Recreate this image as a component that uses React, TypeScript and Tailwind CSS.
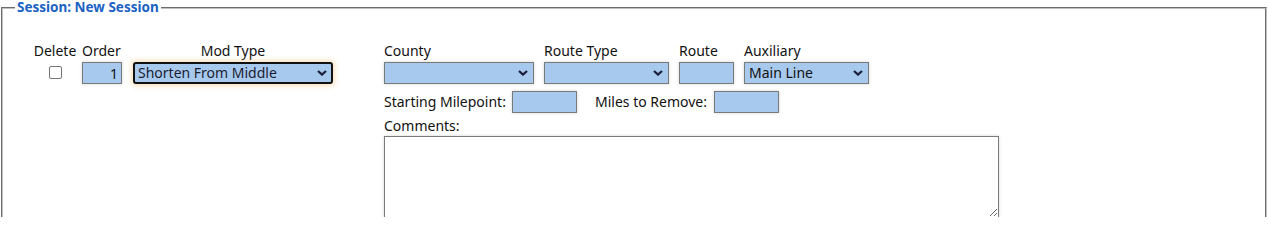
import React, { useState } from 'react'

const fieldBox =
  'h-[22px] border border-[#7a7a7a] bg-[#a7c9ee] text-[14px] text-[#111] shadow-[0_0_3px_rgba(0,0,0,0.18)] outline-none'

function Chevron() {
  return (
    <svg
      className="pointer-events-none absolute right-[6px] top-[8px]"
      width="10"
      height="6"
      viewBox="0 0 10 6"
      fill="none"
    >
      <path d="M1 1l4 3.6L9 1" stroke="#1b1d3a" strokeWidth="2.2" />
    </svg>
  )
}

function Select({
  width,
  value,
  options,
  focused,
}: {
  width: string
  value: string
  options: string[]
  focused?: boolean
}) {
  const [val, setVal] = useState(value)
  return (
    <div className={`relative ${width}`}>
      <select
        value={val}
        onChange={(e) => setVal(e.target.value)}
        className={
          focused
            ? 'h-[22px] w-full appearance-none rounded-[3px] border-2 border-[#111] bg-[#a7c9ee] pl-[3px] text-[14px] text-[#1c1c30] shadow-[0_0_5px_2px_rgba(240,190,120,0.45)] outline-none'
            : `${fieldBox} w-full appearance-none pl-[4px]`
        }
      >
        {options.map((o) => (
          <option key={o} value={o}>
            {o}
          </option>
        ))}
      </select>
      <Chevron />
    </div>
  )
}

export default function App() {
  const [order, setOrder] = useState('1')

  return (
    <div className="h-[217px] overflow-hidden bg-white font-['Noto_Sans','Open_Sans',sans-serif] text-[14px] leading-4 text-[#111]">
      <fieldset className="mx-[1px] border-2 border-[#c0c0c0] px-3 pb-3 [border-style:groove]">
        <legend className="px-[2px] text-[13.5px] leading-[15px] font-bold text-[#1b62c4]">Session: New Session</legend>

        <div className="mt-[28px] flex items-start">
          <div className="ml-[17px] flex w-[46px] flex-col items-center gap-[3px]">
            <label>Delete</label>
            <input
              type="checkbox"
              className="mt-[4px] h-[13px] w-[13px] appearance-none rounded-[2px] border border-[#767676] bg-white"
            />
          </div>
          <div className="ml-[4px] flex w-[40px] flex-col gap-[3px]">
            <label>Order</label>
            <input
              value={order}
              onChange={(e) => setOrder(e.target.value)}
              className={`${fieldBox} w-[40px] pr-[3px] text-right`}
            />
          </div>
          <div className="ml-[11px] flex w-[200px] flex-col items-center gap-[3px]">
            <label>Mod Type</label>
            <Select
              width="w-[200px]"
              value="Shorten From Middle"
              options={['Shorten From Middle', 'Shorten From Start', 'Shorten From End']}
              focused
            />
          </div>

          <div className="ml-[51px] flex flex-col">
            <div className="flex gap-[10px]">
              <div className="flex flex-col gap-[3px]">
                <label>County</label>
                <Select width="w-[150px]" value="" options={['']} />
              </div>
              <div className="flex flex-col gap-[3px]">
                <label>Route Type</label>
                <Select width="w-[125px]" value="" options={['']} />
              </div>
              <div className="flex flex-col gap-[3px]">
                <label>Route</label>
                <input className={`${fieldBox} w-[55px] px-1`} />
              </div>
              <div className="flex flex-col gap-[3px]">
                <label>Auxiliary</label>
                <Select width="w-[125px]" value="Main Line" options={['Main Line', 'Auxiliary']} />
              </div>
            </div>

            <div className="mt-[7px] flex items-center">
              <label className="w-[128px]">Starting Milepoint:</label>
              <input className={`${fieldBox} w-[65px] px-1`} />
              <label className="ml-[18px] w-[119px]">Miles to Remove:</label>
              <input className={`${fieldBox} w-[65px] px-1`} />
            </div>

            <label className="mt-[5px]">Comments:</label>
            <textarea
              rows={5}
              className="mt-[2px] h-[82px] w-[615px] resize border border-[#7a7a7a] bg-white p-1 text-[14px] shadow-[0_0_3px_rgba(0,0,0,0.18)] outline-none"
            />
          </div>
        </div>
      </fieldset>
    </div>
  )
}
